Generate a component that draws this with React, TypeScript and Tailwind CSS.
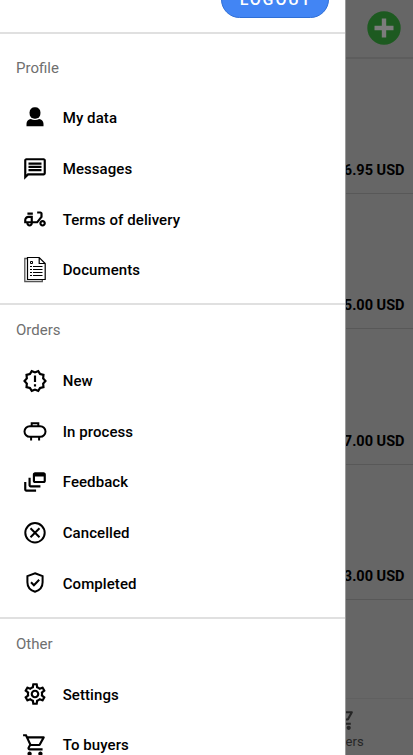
import type { ReactNode } from "react";
import {
  MdOutlineMessage,
  MdOutlineDeliveryDining,
  MdOutlineNewReleases,
  MdOutlineDynamicFeed,
  MdOutlineSettings,
  MdOutlineShoppingCart,
} from "react-icons/md";

function PersonIcon() {
  return (
    <svg width="26" height="26" viewBox="0 0 26 26" fill="currentColor">
      <rect x="7.600" y="2.200" width="10.800" height="11.600" rx="5" />
      <path d="M4.500 21.300v-2.500c0-2.600 1.900-4.300 4.300-4.700 2.500 1.200 5.900 1.200 8.400 0 2.400.4 4.300 2.100 4.300 4.700v2.500z" />
    </svg>
  );
}

function DocumentsIcon() {
  return (
    <svg width="26" height="27" viewBox="0 0 26 27" fill="none" stroke="currentColor">
      <path d="M5 2.500H2.800v23h17.500V24" stroke="#555" strokeWidth="1.300" />
      <path d="M5.500 1.500h11.700l6 6v16H5.500z M17.200 1.500v6h6" strokeWidth="1.200" />
      <path d="M8.500 5.500h2v2h-2z M8 10.500h2m1 0h9.500 M8 13.500h2m1 0h9.500 M8 16.500h2m1 0h9.500 M8 19.500h2m1 0h9.500" strokeWidth="1" />
    </svg>
  );
}

function TankIcon() {
  return (
    <svg width="26" height="26" viewBox="0 0 26 26" fill="none" stroke="currentColor" strokeWidth="2">
      <rect x="2.500" y="7.200" width="21" height="10.600" rx="5.300" />
      <path d="M9.700 7.200V4.200h6.600v3 M9.100 17.500v4 M17.100 17.500v4" />
    </svg>
  );
}

function CancelIcon() {
  return (
    <svg width="26" height="26" viewBox="0 0 26 26" fill="none" stroke="currentColor" strokeWidth="2">
      <circle cx="13" cy="12.800" r="9.700" />
      <path d="M8.500 8.300l9 9 M17.500 8.300l-9 9" />
    </svg>
  );
}

function ShieldIcon() {
  return (
    <svg width="26" height="26" viewBox="0 0 26 26" fill="none" stroke="currentColor" strokeWidth="2">
      <path d="M13 3.300l7.600 2.800v6.200c0 4.600-3.200 8.200-7.600 9.500-4.400-1.300-7.600-4.900-7.600-9.500V6.100z" />
      <path d="M9 12.300l2.900 2.900 5.300-5.500" />
    </svg>
  );
}

type Item = { label: string; icon: ReactNode };

const sections: { title: string; items: Item[] }[] = [
  {
    title: "Profile",
    items: [
      { label: "My data", icon: <PersonIcon /> },
      { label: "Messages", icon: <MdOutlineMessage size={26} /> },
      { label: "Terms of delivery", icon: <MdOutlineDeliveryDining size={26} /> },
      { label: "Documents", icon: <DocumentsIcon /> },
    ],
  },
  {
    title: "Orders",
    items: [
      { label: "New", icon: <MdOutlineNewReleases size={26} /> },
      { label: "In process", icon: <TankIcon /> },
      { label: "Feedback", icon: <MdOutlineDynamicFeed size={26} /> },
      { label: "Cancelled", icon: <CancelIcon /> },
      { label: "Completed", icon: <ShieldIcon /> },
    ],
  },
  {
    title: "Other",
    items: [
      { label: "Settings", icon: <MdOutlineSettings size={26} /> },
      { label: "To buyers", icon: <MdOutlineShoppingCart size={26} /> },
    ],
  },
];

const prices = ["136.95 USD", "225.00 USD", "147.00 USD", "213.00 USD"];

function Backdrop() {
  return (
    <div className="flex h-full flex-col bg-[#666666]">
      <div className="flex h-[59px] shrink-0 items-start justify-end border-b-2 border-[#5d5d5d] pr-[12.500px] pt-[11px]">
        <svg width="34" height="34" viewBox="0 0 34 34">
          <circle cx="17" cy="17" r="16.700" fill="#1d5a20" />
          <path d="M17 7.500v19M7.500 17h19" stroke="#7c7c7c" strokeWidth="4.400" />
        </svg>
      </div>
      {prices.map((price) => (
        <div
          key={price}
          className="flex h-[135.200px] shrink-0 items-end justify-end border-b border-[#585858] pb-[11px] pr-[8.500px] text-[14.500px] leading-[22px] font-bold text-black first-of-type:mt-0"
        >
          {price}
        </div>
      ))}
      <div className="mt-auto flex h-[57px] flex-col items-end border-t border-[#606060] pr-[49px] pt-[8px] text-[#252525]">
        <MdOutlineShoppingCart size={25} className="mr-[8px]" />
        <span className="mt-px text-[13px] leading-[18px] tracking-[0.2px]">To buyers</span>
      </div>
    </div>
  );
}

export default function App() {
  return (
    <div className="relative h-[755px] w-[413px] overflow-hidden bg-[#666666] font-['Roboto',sans-serif]">
      <Backdrop />
      <aside className="absolute inset-y-0 left-0 w-[346px] overflow-hidden border-r border-[#999999] bg-white">
        <div className="flex h-[32px] items-end justify-end pb-[14px] pr-[16px]">
          <button className="flex h-[37px] w-[108px] shrink-0 items-center justify-center rounded-full border border-[#2f6fd6] bg-[#4285f4] pl-[2px] text-[16px] font-medium tracking-[1.900px] text-white">
            LOGOUT
          </button>
        </div>
        {sections.map((section, i) => (
          <section key={section.title} className="border-t-2 border-[#e0e0e0]">
            <h2
              className={`pl-4 text-[15px] leading-5 font-normal text-[#6f6f6f] ${
                i === 0 ? "pt-[23.500px] pb-[15.500px]" : "pt-[15.400px] pb-[15.400px]"
              }`}
            >
              {section.title}
            </h2>
            <ul className="pb-[7.500px]">
              {section.items.map((item) => (
                <li key={item.label} className="flex h-[50.650px] items-center text-black">
                  <span className="ml-[22px] flex w-[26px] shrink-0 justify-center pb-[0.500px]">{item.icon}</span>
                  <span className="ml-[14.700px] text-[15px] leading-5 font-medium tracking-[0.080px]">{item.label}</span>
                </li>
              ))}
            </ul>
          </section>
        ))}
      </aside>
    </div>
  );
}
